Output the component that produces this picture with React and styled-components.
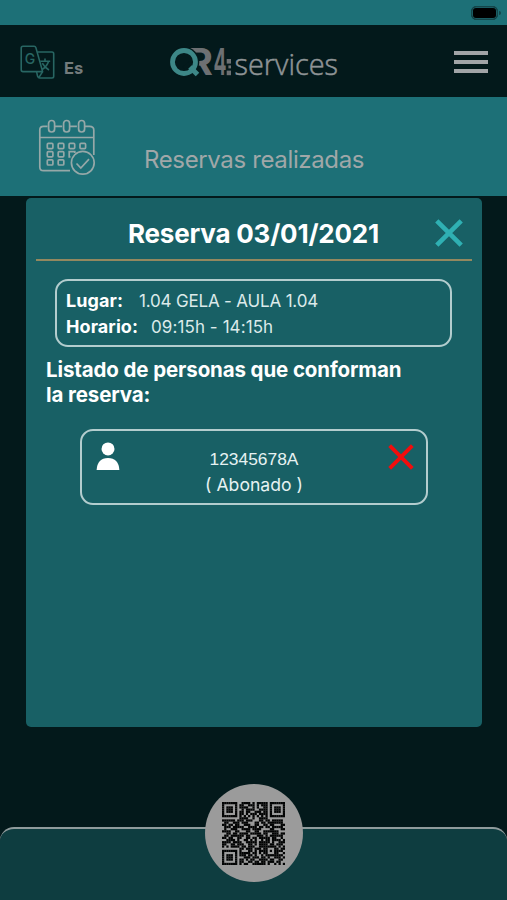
import React, { useState } from 'react'
import styled, { createGlobalStyle } from "styled-components"


const qrFilas = [
  "#######..####.#.#####.#######",
  "#.....#.##..###.#.###.#.....#",
  "#.###.#.####..#.#..##.#.###.#",
  "#.###.#..#.####..####.#.###.#",
  "#.###.#.##.##..###.##.#.###.#",
  "#.....#.##.#.###.####.#.....#",
  "#######.#.#.#.#.#.#.#.#######",
  "........####..#..####........",
  "######.###.###...##.##.#####.",
  ".##..###.###...##.##.#######.",
  "##.##.##..###..##..##.##...##",
  ".###.#####..####.##.##.#####.",
  ".#..###..####.####....##...##",
  "####..##...##..##..#######...",
  "..##.##.####.#####.##..###.##",
  ".##.######.##...###.#.######.",
  "##.##..##..##.##.#####.##..#.",
  "..####.#..##.#.#..#.##.####.#",
  "####.####..#####.#####.#..###",
  "##..##.###..##.#.####.##.###.",
  "#.#.####.##.###..########.#.#",
  "........##.###.###.##...##.##",
  "#######.#...##.#.####.#.####.",
  "#.....#.#####.##.#.##...##..#",
  "#.###.#.###.##.#..#.########.",
  "#.###.#...###.###.##.#..###.#",
  "#.###.#.##.#.##..####.##..##.",
  "#.....#.##..##.##.##.###.##..",
  "#######.#.##..######.#..#.#.#",
];

const personasIniciales = [
  { dni: "12345678A", tipo: "Abonado" },
];

const IconoIdioma = () => (
  <svg width="36" height="36" viewBox="0 0 36 36" fill="none" stroke="#286663" strokeWidth="1.6" strokeLinejoin="round">
    <path d="M3 1.2H14.2Q15.4 1.2 15.8 2.4L22.6 26.6H3Q1.2 26.6 1.2 24.8V3Q1.2 1.2 3 1.2Z" />
    <path d="M17.3 7H32Q33.7 7 33.7 8.7V31.3Q33.7 33 32 33H19.8Q18.2 33 17.6 31.3L16.6 26.8" />
    <path d="M22.6 26.6L18.8 32.6" />
    <path d="M20.3 16.2H30.2M25 13.6V16.2M28.6 16.2Q27 21.5 22 24.5M22.3 18.2Q24.5 22.5 29 25" />
    <text x="4.8" y="19.4" fontFamily="Inter, sans-serif" fontSize="14" fontWeight="500" fill="#286663" stroke="none">G</text>
  </svg>
);

const Logo = () => (
  <svg width="172" height="46" viewBox="0 0 172 46">
    <text x="18" y="35.4" fontFamily="Inter, sans-serif" fontSize="37" fontWeight="700" fill="#6d7073" textLength="26" lengthAdjust="spacingAndGlyphs">R</text>
    <text x="44.5" y="35.4" fontFamily="Inter, sans-serif" fontSize="37" fontWeight="700" fill="#6d7073" textLength="13" lengthAdjust="spacingAndGlyphs">4</text>
    <circle cx="15" cy="22" r="15.3" fill="#03191b" />
    <path d="M17 24L29.5 37" stroke="#03191b" strokeWidth="9" />
    <circle cx="15" cy="22" r="11.5" fill="none" stroke="#3d8787" strokeWidth="4.8" />
    <path d="M21 27L28.5 34.6" stroke="#3d8787" strokeWidth="5" />
    <rect x="57.7" y="19" width="4.3" height="4.6" fill="#6d7073" />
    <rect x="59.4" y="25.4" width="2.6" height="3" fill="#6d7073" />
    <rect x="57.7" y="30.6" width="4.3" height="4.6" fill="#6d7073" />
    <text x="65.5" y="35.2" fontFamily="'Open Sans', sans-serif" fontSize="29.5" fontWeight="300" fill="#8f9496" stroke="#8f9496" strokeWidth="0.5" textLength="103.5" lengthAdjust="spacingAndGlyphs">services</text>
  </svg>
);

const IconoCalendario = () => (
  <svg width="58" height="58" viewBox="0 0 58 58" fill="none" stroke="#96a8a8" strokeWidth="1.7">
    <path d="M9.5 7.3H5.5Q1.8 7.3 1.8 11V48Q1.8 51.7 5.5 51.7H32M16.8 7.3H24.2M31.5 7.3H38.9M46.2 7.3H51.5Q55.8 7.3 55.8 11V36M1.8 18.5H55.8" />
    <rect x="10.6" y="1.5" width="6" height="11.5" rx="3" />
    <rect x="25.6" y="1.5" width="6" height="11.5" rx="3" />
    <rect x="40.6" y="1.5" width="6" height="11.5" rx="3" />
    {[9.3, 20.2, 31.1, 42].map((x) => (
      <rect key={x} x={x} y="24.4" width="5.6" height="5.2" rx="1" />
    ))}
    {[9.3, 20.2].map((x) => (
      <rect key={x} x={x} y="32.6" width="5.6" height="5.2" rx="1" />
    ))}
    <path d="M32.5 37.8H31.2V32.6H36.8V34" />
    {[9.3, 20.2].map((x) => (
      <rect key={x} x={x} y="40.8" width="5.6" height="5.2" rx="1" />
    ))}
    <circle cx="44.8" cy="43.8" r="11.4" />
    <path d="M38.5 44.5L42.8 49L51 40.2" />
  </svg>
);

const IconoPersona = () => (
  <svg width="24" height="28" viewBox="0 0 24 28" fill="#ffffff">
    <circle cx="12" cy="6.9" r="6.5" />
    <path d="M.6 28Q1.4 16 12 16Q22.6 16 23.4 28Z" />
  </svg>
);

const Aspa = ({ color, size, grosor }) => (
  <svg width={size} height={size} viewBox="0 0 28 28" stroke={color} strokeWidth={grosor}>
    <path d="M1.8 1.8L26.2 26.2M26.2 1.8L1.8 26.2" />
  </svg>
);

const CodigoQR = () => (
  <svg width="63" height="63" viewBox="0 0 29 29" fill="#020303">
    {qrFilas.map((fila, y) =>
      fila.split("").map((c, x) =>
        c === "#" ? <rect key={x + "-" + y} x={x} y={y} width="1.03" height="1.03" /> : null
      )
    )}
  </svg>
);

const App = () => {
  const [abierto, setAbierto] = useState(true);
  const [personas, setPersonas] = useState(personasIniciales);

  const quitarPersona = (dni) => {
    setPersonas(personas.filter((p) => p.dni !== dni));
  };

  return (
    <Pantalla>
      <GlobalStyle />
      <BarraEstado>
        <Bateria />
        <Polo />
      </BarraEstado>
      <Cabecera>
        <Idioma>
          <IconoIdioma />
          <span>Es</span>
        </Idioma>
        <LogoCaja>
          <Logo />
        </LogoCaja>
        <Menu aria-label="Menú">
          <Linea />
          <Linea />
          <Linea />
        </Menu>
      </Cabecera>
      <Banner>
        <IconoCalendario />
        <BannerTexto>Reservas realizadas</BannerTexto>
      </Banner>
      <Contenido>
        {abierto && (
          <Panel>
            <PanelCabecera>
              <Titulo>Reserva 03/01/2021</Titulo>
              <BotonIcono aria-label="Cerrar" onClick={() => setAbierto(false)}>
                <Aspa color="#2fb0b3" size={28} grosor={4.6} />
              </BotonIcono>
            </PanelCabecera>
            <Datos>
              <Dato $hueco="16px">
                <b>Lugar:</b>
                <Valor $espacio="-0.18px">1.04 GELA - AULA 1.04</Valor>
              </Dato>
              <Dato $hueco="13px">
                <b>Horario:</b>
                <Valor $espacio="0.08px">09:15h - 14:15h</Valor>
              </Dato>
            </Datos>
            <Subtitulo>Listado de personas que conforman la reserva:</Subtitulo>
            {personas.map((p) => (
              <Persona key={p.dni}>
                <IconoPersona />
                <PersonaTexto>
                  <Dni>{p.dni}</Dni>
                  <span>( {p.tipo} )</span>
                </PersonaTexto>
                <BotonIcono aria-label="Quitar" onClick={() => quitarPersona(p.dni)}>
                  <Aspa color="#f20d0d" size={26} grosor={4.2} />
                </BotonIcono>
              </Persona>
            ))}
          </Panel>
        )}
      </Contenido>
      <Pie>
        <BotonQR aria-label="Código QR">
          <CodigoQR />
        </BotonQR>
      </Pie>
    </Pantalla>
  );
};

export default App;



/* ESTILOS */

const GlobalStyle = createGlobalStyle
`
  * {
    box-sizing: border-box;
  }
  body {
    margin: 0;
    background-color: #03191b;
    font-family: Inter, "Liberation Sans", sans-serif;
  }
  svg {
    display: block;
    flex-shrink: 0;
  }
`;

const Pantalla = styled.div
`
  display: flex;
  flex-direction: column;
  height: 900px;
  overflow: hidden;
  background-color: #03191b;
`;

const BarraEstado = styled.div
`
  display: flex;
  justify-content: flex-end;
  align-items: center;
  gap: 1px;
  height: 25px;
  padding: 1px 6px 0 0;
  background-color: #1d7077;
`;

const Bateria = styled.div
`
  width: 27px;
  height: 14px;
  border: 1px solid #14464a;
  border-radius: 5px;
  background-color: #000000;
  box-shadow: inset 0 0 0 1px #1a5c62;
`;

const Polo = styled.div
`
  width: 2px;
  height: 4px;
  border-radius: 0 2px 2px 0;
  background-color: #14464a;
`;

const Cabecera = styled.header
`
  display: grid;
  grid-template-columns: 149px 1fr 34px;
  align-items: start;
  height: 72px;
  padding: 15px 19px 0 20px;
`;

const Idioma = styled.div
`
  display: flex;
  gap: 8px;
  margin-top: 5px;
  color: #737b7c;
  font-size: 16.5px;
  font-weight: 700;
  line-height: 20px;

  span {
    margin-top: 13px;
  }
`;

const LogoCaja = styled.div
`
  height: 46px;
`;

const Menu = styled.button
`
  display: flex;
  flex-direction: column;
  gap: 5px;
  width: 34px;
  margin-top: 11px;
  padding: 0;
  border: none;
  background: none;
  cursor: pointer;
`;

const Linea = styled.span
`
  width: 34px;
  height: 4px;
  background-color: #a1a4a7;
`;

const Banner = styled.div
`
  display: flex;
  gap: 48px;
  height: 99px;
  padding: 22px 0 0 38px;
  background-color: #1d7077;
`;

const BannerTexto = styled.div
`
  margin-top: 26px;
  color: #a0a7a8;
  font-size: 24px;
  line-height: 30px;
  letter-spacing: -0.36px;
  white-space: nowrap;
`;

const Contenido = styled.main
`
  height: 631px;
  padding: 2px 25px 0 26px;
`;

const Panel = styled.section
`
  height: 529px;
  padding: 0 10px;
  border-radius: 5px;
  background-color: #186065;
  color: #ffffff;
`;

const PanelCabecera = styled.div
`
  display: grid;
  grid-template-columns: 1fr 28px;
  align-items: start;
  height: 63px;
  padding: 21px 9px 0 92px;
  border-bottom: 2px solid #93885f;
`;

const Titulo = styled.h1
`
  margin: -1px 0 0;
  font-size: 26px;
  font-weight: 700;
  line-height: 32px;
  letter-spacing: -0.2px;
  white-space: nowrap;
`;

const BotonIcono = styled.button
`
  padding: 0;
  border: none;
  background: none;
  cursor: pointer;
`;

const Datos = styled.div
`
  height: 68px;
  margin: 18px 20px 0 19px;
  padding: 7px 8px 0 9px;
  border: 2px solid #b3cdce;
  border-radius: 13px;
`;

const Dato = styled.div
`
  display: flex;
  gap: ${(props) => props.$hueco};
  font-size: 18px;
  line-height: 26px;
  white-space: nowrap;

  b {
    letter-spacing: 0.08px;
  }
`;

const Valor = styled.span
`
  color: #dceaea;
  font-size: 17px;
  letter-spacing: ${(props) => props.$espacio};
`;

const Subtitulo = styled.h2
`
  width: 374px;
  margin: 11px 0 0 10px;
  font-size: 20.5px;
  font-weight: 700;
  line-height: 24.5px;
  letter-spacing: -0.12px;
`;

const Persona = styled.div
`
  display: grid;
  grid-template-columns: 24px 1fr 26px;
  align-items: start;
  height: 76px;
  margin: 22px 44px 0;
  padding: 11px 12px 0 14px;
  border: 2px solid #b3cdce;
  border-radius: 13px;

  button {
    margin-top: 2px;
  }
`;

const PersonaTexto = styled.div
`
  display: flex;
  flex-direction: column;
  margin-top: 4px;
  color: #e6f2f2;
  font-size: 17.6px;
  line-height: 26px;
  text-align: center;
`;

const Dni = styled.span
`
  font-family: "Liberation Sans", Arial, sans-serif;
  font-size: 17.4px;
`;

const Pie = styled.footer
`
  display: flex;
  justify-content: center;
  height: 73px;
  border-top: 2px solid #8f9b9c;
  border-radius: 14px 14px 0 0;
  background-color: #0e3d40;
`;

const BotonQR = styled.button
`
  display: flex;
  justify-content: center;
  align-items: center;
  width: 98px;
  height: 98px;
  margin-top: -45px;
  padding: 0;
  border: none;
  border-radius: 50%;
  background-color: #9b9b9b;
  cursor: pointer;
`;
